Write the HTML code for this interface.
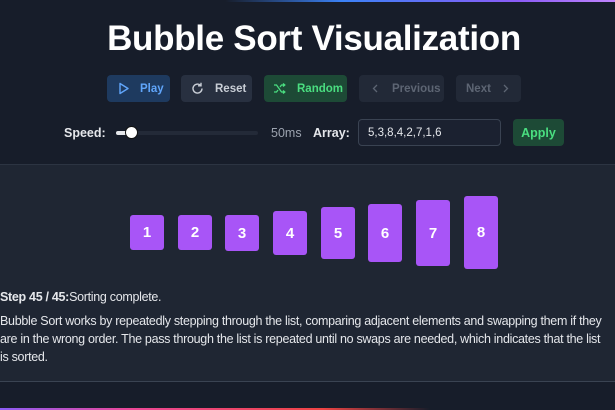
<!DOCTYPE html>
<html><head><style>
*{margin:0;padding:0;box-sizing:border-box}
body{width:615px;height:410px;overflow:hidden;background:#171d2a;font-family:"Liberation Sans",sans-serif;position:relative;color:#e5e7eb}
.topline{position:absolute;top:0;left:225px;width:390px;height:2px;background:linear-gradient(90deg,rgba(37,99,235,0),#3b82f6 30%,#8b5cf6 75%,#c084fc)}
.botline{position:absolute;bottom:0;left:0;width:430px;height:2px;background:linear-gradient(90deg,#8b5cf6,#ec4899 30%,#ef4444 75%,rgba(239,68,68,0))}
h1{position:absolute;top:19px;left:0;width:615px;padding-left:13px;text-align:center;font-size:35px;font-weight:bold;color:#fff;letter-spacing:-0.3px}
.btn{position:absolute;top:75px;height:27px;border-radius:4px;font-size:11.5px;font-weight:bold}
.btn svg{position:absolute;top:7px}
.btn span{position:absolute;top:7px;line-height:14px}
.panel{position:absolute;top:164px;left:0;width:615px;height:218px;background:#1f2633;border-top:1px solid #2c3442;border-bottom:1px solid #3a4352}
.bar{position:absolute;width:34px;background:#a855f7;border-radius:3px;color:#fff;font-weight:bold;font-size:15px;display:flex;align-items:center;justify-content:center}
p{position:absolute;left:0;font-size:12.5px;color:#e5e7eb;line-height:18px;white-space:nowrap;letter-spacing:-0.3px}
</style></head><body>
<div class="topline"></div>
<h1>Bubble Sort Visualization</h1>

<div class="btn" style="left:107px;width:63px;background:#1e3a5f;color:#60a5fa">
<svg style="left:11px" width="12" height="13" viewBox="0 0 12 13"><path d="M2 1.5 L10 6.5 L2 11.5 Z" fill="none" stroke="#60a5fa" stroke-width="1.4" stroke-linejoin="round"/></svg>
<span style="left:33px">Play</span></div>

<div class="btn" style="left:181px;width:71px;background:#283040;color:#c9ced6">
<svg style="left:10px" width="13" height="13" viewBox="0 0 13 13"><path d="M11 6.5 A4.5 4.5 0 1 1 9.5 3.2" fill="none" stroke="#c9ced6" stroke-width="1.4"/><path d="M10 0.8 V3.8 H7" fill="none" stroke="#c9ced6" stroke-width="1.4"/></svg>
<span style="left:34px">Reset</span></div>

<div class="btn" style="left:264px;width:83px;background:#1d4a36;color:#4ade80">
<svg style="left:9px" width="13" height="13" viewBox="0 0 13 13"><path d="M1 3 H3.5 L8.5 10 H11.5 M1 10 H3.5 L5 8 M7 5 L8.5 3 H11.5 M10 1.5 L11.8 3 L10 4.5 M10 8.5 L11.8 10 L10 11.5" fill="none" stroke="#4ade80" stroke-width="1.3"/></svg>
<span style="left:33px">Random</span></div>

<div class="btn" style="left:359px;width:85px;background:#222937;color:#5d6573">
<svg style="left:12px" width="8" height="13" viewBox="0 0 8 13"><path d="M6 3 L2.5 6.5 L6 10" fill="none" stroke="#5d6573" stroke-width="1.3"/></svg>
<span style="left:33px">Previous</span></div>

<div class="btn" style="left:456px;width:65px;background:#222937;color:#5d6573">
<span style="left:10px">Next</span>
<svg style="left:46px" width="8" height="13" viewBox="0 0 8 13"><path d="M2 3 L5.5 6.5 L2 10" fill="none" stroke="#5d6573" stroke-width="1.3"/></svg></div>

<div style="position:absolute;left:64px;top:126px;font-size:12.5px;font-weight:bold;color:#e5e7eb">Speed:</div>
<div style="position:absolute;left:116px;top:131px;width:142px;height:4px;border-radius:2px;background:#232a38"></div>
<div style="position:absolute;left:116px;top:131px;width:14px;height:4px;border-radius:2px;background:#e5e7eb"></div>
<div style="position:absolute;left:125px;top:126px;width:13px;height:13px;border-radius:50%;background:#fff;border:1.5px solid #111"></div>
<div style="position:absolute;left:271px;top:126px;font-size:12.5px;color:#9ca3af">50ms</div>
<div style="position:absolute;left:313px;top:126px;font-size:12.5px;font-weight:bold;color:#e5e7eb">Array:</div>
<div style="position:absolute;left:358px;top:119px;width:143px;height:27px;border:1px solid #3a4352;border-radius:4px;background:#1b2130;font-size:11.5px;color:#e5e7eb;padding:7px 0 0 9px">5,3,8,4,2,7,1,6</div>
<div style="position:absolute;left:513px;top:119px;width:51px;height:27px;border-radius:4px;background:#1d4a36;color:#4ade80;font-size:12.5px;font-weight:bold;text-align:center;padding-top:7px">Apply</div>

<div class="panel">
<div class="bar" style="left:130px;top:50px;height:35px">1</div>
<div class="bar" style="left:178px;top:50px;height:35px">2</div>
<div class="bar" style="left:225px;top:50px;height:36px">3</div>
<div class="bar" style="left:273px;top:46px;height:44px">4</div>
<div class="bar" style="left:321px;top:42px;height:52px">5</div>
<div class="bar" style="left:368px;top:39px;height:58px">6</div>
<div class="bar" style="left:416px;top:35px;height:66px">7</div>
<div class="bar" style="left:464px;top:31px;height:73px">8</div>
<p style="top:123px"><b>Step 45 / 45:</b>Sorting complete.</p>
<p style="top:147px">Bubble Sort works by repeatedly stepping through the list, comparing adjacent elements and swapping them if they<br>are in the wrong order. The pass through the list is repeated until no swaps are needed, which indicates that the list<br>is sorted.</p>
</div>
<div class="botline"></div>
</body></html>
